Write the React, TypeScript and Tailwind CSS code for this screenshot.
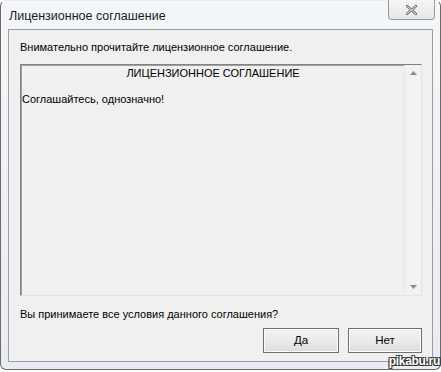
const ui = { fontFamily: '"Liberation Sans", Arial, sans-serif' };

function ScrollArrow({ up }: { up?: boolean }) {
  return (
    <svg width="7" height="4" viewBox="0 0 7 4" className="text-[#8a8a8a]">
      <path d={up ? 'M0 4 L3.5 0 L7 4 Z' : 'M0 0 L3.5 4 L7 0 Z'} fill="currentColor" />
    </svg>
  );
}

function Button({ children, className }: { children: React.ReactNode; className?: string }) {
  return (
    <button
      className={`h-[25px] border border-[#707070] bg-gradient-to-b from-[#f2f2f2] via-[#ebebeb] to-[#dddddd] text-[11.5px] text-black shadow-[inset_0_0_0_1px_#fcfcfc] ${className ?? ''}`}
      style={ui}
    >
      {children}
    </button>
  );
}

export default function App() {
  return (
    <div className="relative h-[372px] w-[441px] overflow-hidden bg-white">
      <div className="flex h-[370px] w-[441px] flex-col rounded-b-[6px] rounded-t-[6px] border border-[#6b6b6b] border-t-transparent bg-gradient-to-b from-[#f4f7fa] via-[#eef2f6] to-[#e9edf1] px-[7px] pb-[7px]">
        <div className="relative flex h-[28px] shrink-0 items-center">
          <span className="pl-px pt-[2px] text-[12.5px] text-[#1a1a1a]" style={ui}>
            Лицензионное соглашение
          </span>
          <div className="absolute -top-px right-[-2px] flex h-[20px] w-[47px] items-center justify-center rounded-b-[4px] border border-t-0 border-[#9a9a9a] bg-gradient-to-b from-[#f5f5f5] to-[#e6e6e6]">
            <svg width="11" height="10" viewBox="0 0 11 10">
              <path d="M1 1 L10 9 M10 1 L1 9" stroke="#6e6e6e" strokeWidth="2.4" strokeLinecap="square" />
              <path d="M1 1 L10 9 M10 1 L1 9" stroke="#f4f4f4" strokeWidth="0.9" />
            </svg>
          </div>
        </div>

        <div className="flex flex-1 flex-col border border-[#9d9d9d] bg-[#f0f0f0] pl-[11px] pr-[10px]" style={ui}>
          <div className="mt-[10px] h-[14px] text-[11px] leading-[14px] text-black">
            Внимательно прочитайте лицензионное соглашение.
          </div>

          <div className="mt-[10px] flex h-[232px] border border-t-[#828282] border-l-[#828282] border-r-[#e3e3e3] border-b-[#e3e3e3] shadow-[inset_1px_1px_0_#a0a0a0]">
            <div className="flex-1 pl-px pt-[1px] text-[11px] leading-[14px] text-black">
              <div className="text-center">ЛИЦЕНЗИОННОЕ СОГЛАШЕНИЕ</div>
              <div className="mt-[12px]">Соглашайтесь, однозначно!</div>
            </div>
            <div className="flex w-[17px] flex-col items-center justify-between border-l border-[#e6e6e6] bg-[#f2f2f2] py-[6px]">
              <ScrollArrow up />
              <ScrollArrow />
            </div>
          </div>

          <div className="mt-[11px] h-[14px] text-[11px] leading-[14px] text-black">
            Вы принимаете все условия данного соглашения?
          </div>

          <div className="mt-[7px] flex justify-end gap-[9px]">
            <Button className="w-[76px]">Да</Button>
            <Button className="w-[74px]">Нет</Button>
          </div>
        </div>
      </div>

      <div
        className="absolute bottom-[2px] right-[1px] text-[12px] font-bold tracking-tight text-white"
        style={{ fontFamily: '"Liberation Sans", Arial, sans-serif', textShadow: '-1px -1px 0 #333, 1px -1px 0 #333, -1px 1px 0 #333, 1px 1px 0 #333' }}
      >
        pikabu.ru
      </div>
    </div>
  );
}
